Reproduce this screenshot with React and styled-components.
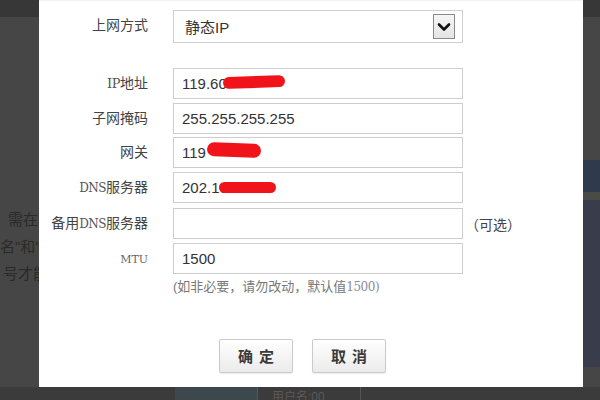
import styled, { createGlobalStyle } from "styled-components";

const GlobalStyle = createGlobalStyle`
  html, body {
    margin: 0;
    padding: 0;
    background: #464646;
  }
  body {
    font-family: "Liberation Sans", "Noto Sans CJK SC", sans-serif;
  }
`;

const CJK = `"Liberation Sans", "Noto Sans CJK SC", sans-serif`;

// 배경 페이지 (모달 뒤)
const Page = styled.div`
  position: relative;
  width: 600px;
  height: 400px;
  overflow: hidden;
  background: #464646;
  display: flex;
  flex-direction: column;
`;

const TopBar = styled.div`
  height: 17px;
  background: #373737;
`;

const PageBody = styled.div`
  flex: 1;
  display: flex;
  justify-content: space-between;
`;

const LeftCol = styled.div`
  padding-top: 189px;
  font-family: ${CJK};
  font-size: 15px;
  line-height: 27px;
  color: #2a2a2a;
  white-space: nowrap;
`;

const BgLine = styled.div`
  padding-left: ${(p) => p.indent || 0}px;
`;

const RightCol = styled.div`
  width: 17px;
  padding-top: 143px;
  display: flex;
  flex-direction: column;
`;

const NavyBand = styled.div`
  height: ${(p) => p.h}px;
  background: ${(p) => p.bg};
`;

const BottomStrip = styled.div`
  height: 13px;
  background: #3b3b3b;
  display: flex;
  padding-left: 175px;
`;

const TealBlock = styled.div`
  width: 82px;
  background: #3c484b;
`;

const UserBox = styled.div`
  width: 88px;
  border-left: 1px solid #555;
  border-right: 1px solid #555;
  font-family: ${CJK};
  font-size: 12px;
  line-height: 12px;
  padding-top: 4px;
  color: #5a5a5a;
  padding-left: 14px;
  overflow: hidden;
`;

// 모달
const Dialog = styled.div`
  position: absolute;
  top: 0;
  left: 39px;
  width: 544px;
  height: 387px;
  background: #fff;
  border-top: 1px solid #f2f2f2;
  box-sizing: border-box;
`;

const Form = styled.div`
  display: grid;
  grid-template-columns: 134px 290px auto;
  row-gap: 3.6px;
  padding-top: 9px;
`;

const Spacer = styled.div`
  grid-column: 1 / -1;
  height: ${(p) => p.h}px;
`;

const Label = styled.div`
  line-height: 31px;
  text-align: right;
  padding-right: 25px;
  font-family: ${CJK};
  font-size: 14px;
  color: #444;
  white-space: nowrap;
`;

const Latin = styled.span`
  font-family: "DejaVu Serif", "Liberation Serif", serif;
  font-size: ${(p) => p.size || 12}px;
  color: ${(p) => p.color || "#555"};
  letter-spacing: ${(p) => p.spacing ?? -0.5}px;
`;

const SelectBox = styled.div`
  height: 33px;
  margin-bottom: -2px;
  border: 1px solid #cfcfcf;
  box-sizing: border-box;
  display: flex;
  align-items: center;
  justify-content: space-between;
  padding: 0 7px 0 11px;
  font-family: ${CJK};
  font-size: 15px;
  color: #333;
`;

const DropButton = styled.div`
  width: 22px;
  height: 25px;
  box-sizing: border-box;
  border: 1px solid #8a8a8a;
  background: linear-gradient(#f6f6f6, #e4e4e4);
  display: flex;
  align-items: center;
  justify-content: center;
`;

const Field = styled.div`
  position: relative;
  height: 31px;
  border: 1px solid #cdcdcd;
  box-sizing: border-box;
  display: flex;
  align-items: center;
  padding-left: 8px;
  font-family: ${CJK};
  font-size: 15px;
  color: #333;
`;

// 개인정보 가림 (빨간 낙서)
const Redact = styled.span`
  position: absolute;
  left: ${(p) => p.x}px;
  top: ${(p) => p.y}px;
  width: ${(p) => p.w}px;
  height: ${(p) => p.h}px;
  background: #f0141a;
  border-radius: 8px;
  transform: rotate(${(p) => p.rot || 0}deg);
`;

const Note = styled.div`
  display: flex;
  align-items: center;
  font-family: ${CJK};
  font-size: 14px;
  color: #444;
  padding-left: 2px;
`;

const Hint = styled.div`
  grid-column: 2 / 4;
  height: 22px;
  margin-top: -3px;
  font-family: ${CJK};
  font-size: 13px;
  color: #777;
  line-height: 22px;
  white-space: nowrap;
`;

const ButtonRow = styled.div`
  display: flex;
  gap: 19px;
  padding-left: 180px;
  margin-top: 41px;
`;

const Button = styled.button`
  width: 74px;
  height: 34px;
  border: 1px solid #cacaca;
  border-radius: 2px;
  background: linear-gradient(#ffffff, #ebebeb);
  font-family: ${CJK};
  font-size: 15px;
  font-weight: 600;
  color: #3a3a3a;
  letter-spacing: 6px;
  padding: 0 0 0 6px;
  box-shadow: 0 1px 1px rgba(0, 0, 0, 0.08);
`;

const Chevron = () => (
  <svg width="14" height="10" viewBox="0 0 14 10">
    <path
      d="M2 2.5 L7 7.5 L12 2.5"
      fill="none"
      stroke="#111"
      strokeWidth="2.6"
      strokeLinecap="round"
      strokeLinejoin="round"
    />
  </svg>
);

const App = () => {
  return (
    <>
      <GlobalStyle />
      <Page>
        <TopBar />
        <PageBody>
          <LeftCol>
            <BgLine indent={8}>需在</BgLine>
            <BgLine indent={0}>名"和"</BgLine>
            <BgLine indent={3}>号才能</BgLine>
          </LeftCol>
          <RightCol>
            <NavyBand h={32} bg="#2f3a4c" />
            <NavyBand h={8} bg="#4a4a46" />
            <NavyBand h={167} bg="#393c4b" />
          </RightCol>
        </PageBody>
        <BottomStrip>
          <TealBlock />
          <UserBox>用户名:00</UserBox>
        </BottomStrip>

        <Dialog>
          <Form>
            <Label>上网方式</Label>
            <SelectBox>
              <span>静态IP</span>
              <DropButton>
                <Chevron />
              </DropButton>
            </SelectBox>
            <div />
            <Spacer h={20} />

            <Label>
              <Latin size={13}>IP</Latin>地址
            </Label>
            <Field>
              119.60
              <Redact x={49} y={7} w={62} h={12} rot={-2} />
            </Field>
            <div />

            <Label>子网掩码</Label>
            <Field>255.255.255.255</Field>
            <div />

            <Label>网关</Label>
            <Field>
              119
              <Redact x={33} y={5} w={54} h={14} rot={2} />
            </Field>
            <div />

            <Label>
              <Latin>DNS</Latin>服务器
            </Label>
            <Field>
              202.10
              <Redact x={45} y={9} w={57} h={11} />
            </Field>
            <div />

            <Label>
              备用<Latin>DNS</Latin>服务器
            </Label>
            <Field />
            <Note>（可选）</Note>

            <Label>
              <Latin color="#666" size={11} spacing={0}>
                MTU
              </Latin>
            </Label>
            <Field>1500</Field>
            <div />

            <Hint>
              (如非必要，请勿改动，默认值<Latin color="#8a8c9c">1500)</Latin>
            </Hint>
          </Form>
          <ButtonRow>
            <Button>确定</Button>
            <Button>取消</Button>
          </ButtonRow>
        </Dialog>
      </Page>
    </>
  );
};

export default App;
